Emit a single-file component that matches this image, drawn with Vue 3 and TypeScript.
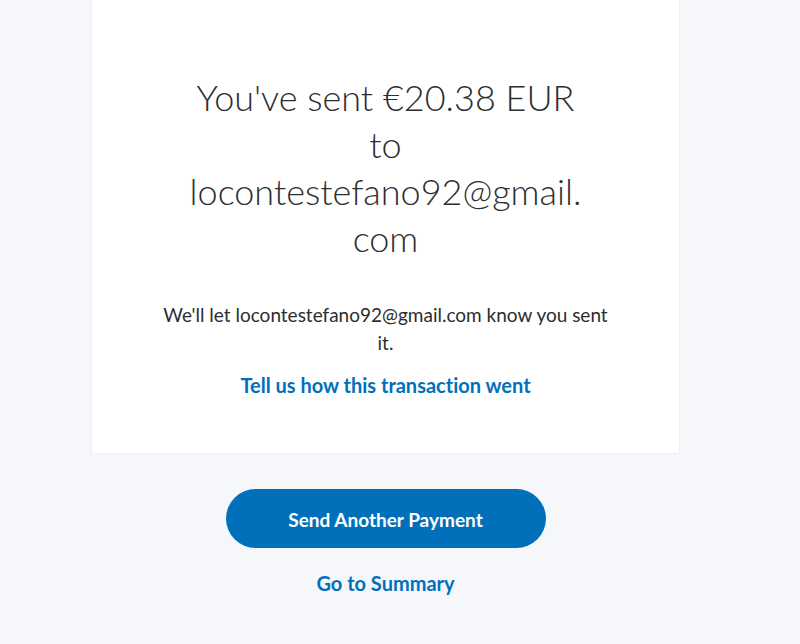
<script setup lang="ts">
const amount: string = '€20.38 EUR'
const mailbox: string = 'locontestefano92@gmail.'
const domainEnd: string = 'com'
const recipient: string = mailbox + domainEnd
</script>

<template>
  <main class="page">
    <section class="card">
      <h1 class="title">
        You've sent {{ amount }}<br />to<br />{{ mailbox }}<wbr />{{ domainEnd }}
      </h1>
      <p class="note">We'll let {{ recipient }} know you sent it.</p>
      <a class="link" href="#feedback">Tell us how this transaction went</a>
    </section>
    <div class="actions">
      <button class="primary" type="button">Send Another Payment</button>
      <a class="link" href="#summary">Go to Summary</a>
    </div>
  </main>
</template>

<style>
body {
  background: #f5f7fa;
}
</style>

<style scoped>
.page {
  box-sizing: border-box;
  padding: 0 120px 44px 91px;
  font-family: Lato, "Open Sans", sans-serif;
  font-variant-ligatures: none;
  color: #2c2e2f;
  text-align: center;
}
.card {
  padding: 74px 64px 54px;
  background: #fff;
  border: 1px solid #eff1f3;
  border-top: 0;
}
.title {
  margin: 0 auto;
  max-width: 400px;
  font-size: 36px;
  line-height: 47px;
  font-weight: 300;
}
.note {
  margin: 39px 0 14px;
  font-size: 19px;
  line-height: 28px;
}
.link {
  display: inline-block;
  color: #0070ba;
  font-size: 20px;
  line-height: 28px;
  font-weight: 700;
  text-decoration: none;
}
.actions {
  display: flex;
  flex-direction: column;
  align-items: center;
  gap: 21px;
  padding-top: 35px;
}
.primary {
  width: 320px;
  max-width: 100%;
  height: 59px;
  padding: 2px 0 0;
  border: 0;
  border-radius: 30px;
  background: #0070ba;
  color: #fff;
  font-family: inherit;
  font-size: 19px;
  font-weight: 700;
}
</style>
